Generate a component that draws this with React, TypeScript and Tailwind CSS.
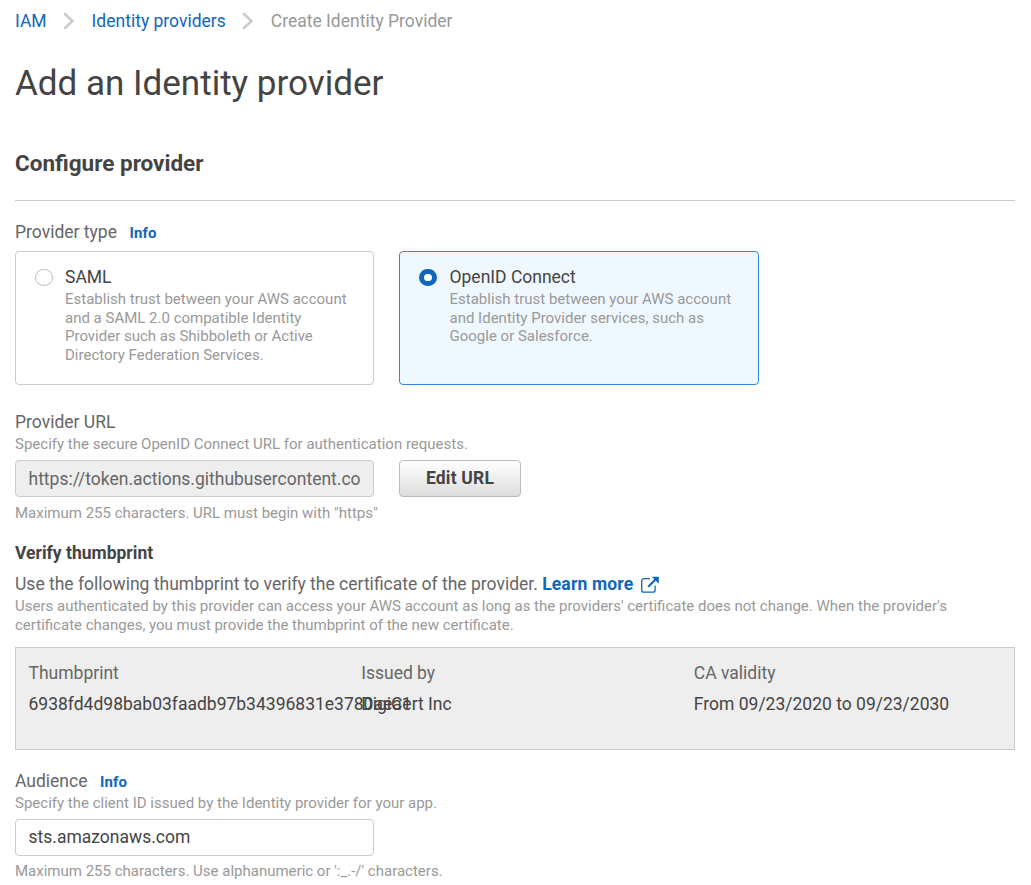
import React from 'react';

function Chevron() {
  return (
    <svg className="mx-[16.5px] h-[18px] w-[12px] shrink-0" viewBox="0 0 12 18" fill="none" stroke="#cccccc" strokeWidth="2.6">
      <path d="M1.2 1.2 9.4 9 1.2 16.8" />
    </svg>
  );
}

function ExternalIcon() {
  return (
    <svg className="ml-2 mt-[3px] h-[18px] w-[18px] shrink-0" viewBox="0 0 18 18" fill="none" stroke="#1166bb">
      <path d="M9 2.7H2.9A2.2 2.2 0 0 0 .7 4.9v9a2.2 2.2 0 0 0 2.2 2.2h9a2.2 2.2 0 0 0 2.2-2.2V9.5" strokeWidth="1.3" />
      <path d="M7.2 10.8 14.5 3.5" strokeWidth="2" />
      <path d="M10.8.8H17.8V7.8Z" fill="#1166bb" stroke="none" />
    </svg>
  );
}

function Info() {
  return <a className="ml-[12.5px] text-[15px] font-bold tracking-[0.15px] text-[#1166bb]">Info</a>;
}

function Hint({ className = '', children }: { className?: string; children: React.ReactNode }) {
  return <p className={`text-[15px] leading-[18.75px] text-[#999999] ${className}`}>{children}</p>;
}

function ProviderCard({ title, selected, children }: { title: string; selected?: boolean; children: React.ReactNode }) {
  return (
    <label
      className={`flex h-[134px] rounded-[4px] border pl-[19px] pr-5 pt-[14px] ${
        selected ? 'w-[360px] border-[#3388dd] bg-[#f0f8ff]' : 'w-[359px] border-[#cccccc] bg-white'
      }`}
    >
      <span
        className={`mt-[2.5px] h-[17.5px] w-[18px] shrink-0 rounded-full bg-white ${
          selected ? 'border-[5.5px] border-[#1166bb]' : 'border border-[#bbbbbb]'
        }`}
      />
      <span className={`block ${selected ? 'ml-[12.5px]' : 'ml-3'}`}>
        <span className="block leading-[22px] text-[#444444]">{title}</span>
        <Hint className="mt-[1.8px]">{children}</Hint>
      </span>
    </label>
  );
}

function ThumbColumn({ label, value }: { label: string; value: string }) {
  return (
    <div className="min-w-0 whitespace-nowrap pl-[12.5px]">
      <div className="text-[#666666]">{label}</div>
      <div className="mt-[9px] text-[#444444]">{value}</div>
    </div>
  );
}

export default function App() {
  return (
    <main className="flex h-[885px] w-[1031px] flex-col overflow-hidden bg-white pl-[15px] pr-4 pt-[10px] font-['Roboto',sans-serif] text-[17.5px] leading-[22px] text-[#666666]">
      <nav className="flex h-[22px] items-center text-[#1166bb]">
        <a>IAM</a>
        <Chevron />
        <a>Identity providers</a>
        <Chevron />
        <span className="text-[#999999]">Create Identity Provider</span>
      </nav>

      <h1 className="mt-[31px] text-[35px] leading-[42px] text-[#444444]">Add an Identity provider</h1>
      <h2 className="mt-[44px] text-[22.5px] font-bold leading-[28px] text-[#444444]">Configure provider</h2>
      <hr className="mt-[23px] border-[#cccccc]" />

      <div className="mt-5 flex h-[22px] items-baseline">
        Provider type
        <Info />
      </div>
      <div className="mt-2 flex gap-[25px]">
        <ProviderCard title="SAML">
          Establish trust between your AWS account and a SAML 2.0 compatible Identity Provider such as Shibboleth or Active Directory
          Federation Services.
        </ProviderCard>
        <ProviderCard title="OpenID Connect" selected>
          Establish trust between your AWS account and Identity Provider services, such as Google or Salesforce.
        </ProviderCard>
      </div>

      <div className="mt-[26px]">Provider URL</div>
      <div className="h-[27px] pt-[1.5px]">
        <Hint>Specify the secure OpenID Connect URL for authentication requests.</Hint>
      </div>
      <div className="flex gap-[25px]">
        <input
          readOnly
          value="https://token.actions.githubusercontent.com"
          className="h-[37px] w-[359px] rounded-[4px] border border-[#cccccc] bg-[#eeeeee] px-[12.5px] text-[#666666] outline-none"
        />
        <button className="h-[37px] w-[122px] rounded-[4px] border border-[#bbbbbb] bg-gradient-to-b from-white to-[#dddddd] pb-[2px] font-bold tracking-[0.175px] text-[#444444]">
          Edit URL
        </button>
      </div>
      <div className="h-[45px] pt-[6.5px]">
        <Hint>Maximum 255 characters. URL must begin with "https"</Hint>
      </div>

      <h3 className="font-bold text-[#444444]">Verify thumbprint</h3>
      <div className="mt-[9px] flex h-[22px]">
        <span className="whitespace-pre">Use the following thumbprint to verify the certificate of the provider. </span>
        <a className="flex font-bold tracking-[0.15px] text-[#1166bb]">
          Learn more
          <ExternalIcon />
        </a>
      </div>
      <div className="h-[52px] pt-[1.8px]">
        <Hint>
          Users authenticated by this provider can access your AWS account as long as the providers' certificate does not change. When
          the provider's certificate changes, you must provide the thumbprint of the new certificate.
        </Hint>
      </div>

      <div className="grid h-[103px] shrink-0 grid-cols-3 border border-[#cccccc] bg-[#eeeeee] pt-[14px]">
        <ThumbColumn label="Thumbprint" value="6938fd4d98bab03faadb97b34396831e3780aea1" />
        <ThumbColumn label="Issued by" value="DigiCert Inc" />
        <ThumbColumn label="CA validity" value="From 09/23/2020 to 09/23/2030" />
      </div>

      <div className="mt-5 flex h-[22px] items-baseline">
        Audience
        <Info />
      </div>
      <div className="h-[27px] pt-[1.5px]">
        <Hint>Specify the client ID issued by the Identity provider for your app.</Hint>
      </div>
      <input
        readOnly
        value="sts.amazonaws.com"
        className="h-[37px] w-[359px] shrink-0 rounded-[4px] border border-[#cccccc] bg-white px-[12.5px] pb-[2px] text-[#444444] outline-none"
      />
      <Hint className="mt-[5.5px]">Maximum 255 characters. Use alphanumeric or ':_.-/' characters.</Hint>
    </main>
  );
}
